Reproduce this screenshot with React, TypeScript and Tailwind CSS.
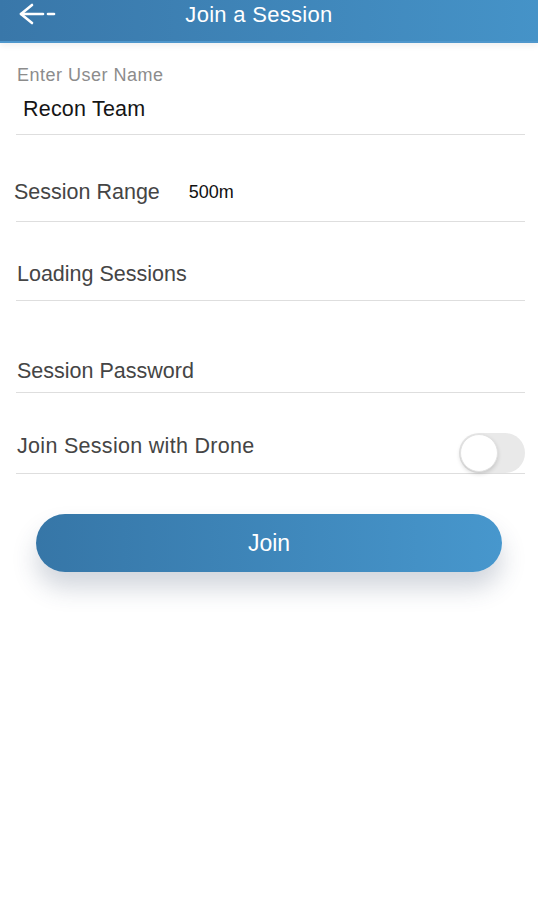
import { useState } from "react";

const Row = ({ children, className = "" }: { children: React.ReactNode; className?: string }) => (
  <div className={`border-b border-[#dedede] ${className}`}>{children}</div>
);

const App = () => {
  const [withDrone, setWithDrone] = useState(false);

  return (
    <div className="min-h-screen bg-white" style={{ fontFamily: '"Liberation Sans", Arial, sans-serif' }}>
      {/* Header */}
      <div className="relative h-[43px] bg-gradient-to-r from-[#3977a9] to-[#4593c8] border-b-2 border-[#4f97cc] shadow-[0_3px_6px_rgba(0,0,0,0.06)] flex items-center justify-center pr-[20px]">
        <button className="absolute left-[17px] top-[2px]">
          <svg width="40" height="24" viewBox="0 0 40 24" fill="none" stroke="white" strokeWidth="2.6" strokeLinecap="round" strokeLinejoin="round">
            <path d="M15 3 L4 12 L15 21" />
            <path d="M4 12 H26" />
            <path d="M31 12 H37" />
          </svg>
        </button>
        <h1 className="text-[22px] text-white leading-none -mt-[12px] tracking-[0.3px]">Join a Session</h1>
      </div>

      <div className="pl-[16px] pr-[13px]">
        <Row className="pt-[22px] pb-[12px]">
          <div className="text-[18px] leading-[20px] text-[#8c8c8c] pl-[1px] tracking-[0.5px]">Enter User Name</div>
          <div className="mt-[11px] text-[21.5px] leading-[26px] text-[#151515] pl-[7px] tracking-[0.2px]">Recon Team</div>
        </Row>

        <Row className="pt-[44px] pb-[16px] flex items-center">
          <span className="text-[21.5px] leading-[26px] text-[#454545] -ml-[2px]">Session Range</span>
          <span className="ml-[29px] text-[18px] leading-[26px] text-[#111] font-medium">500m</span>
        </Row>

        <Row className="pt-[39px] pb-[13px]">
          <div className="text-[21.5px] leading-[26px] text-[#454545] pl-[1px]">Loading Sessions</div>
        </Row>

        <Row className="pt-[57px] pb-[8px]">
          <div className="text-[21.5px] leading-[26px] text-[#454545] pl-[1px]">Session Password</div>
        </Row>

        <Row className="pt-[40px] flex items-start justify-between">
          <span className="text-[21.5px] leading-[26px] text-[#454545] pl-[1px] tracking-[0.3px]">Join Session with Drone</span>
          <button
            onClick={() => setWithDrone(!withDrone)}
            className={`relative w-[66px] h-[40px] rounded-full ${withDrone ? "bg-[#4593c8]" : "bg-[#e9e9e9]"}`}
          >
            <span
              className={`absolute top-[1px] ${withDrone ? "left-[27px]" : "left-[1px]"} w-[38px] h-[38px] rounded-full bg-white border border-[#e2e2e2] shadow-[0_2px_4px_rgba(0,0,0,0.15)]`}
            />
          </button>
        </Row>

        <div className="mt-[40px] pl-[20px] pr-[23px]">
          <button className="w-full h-[58px] rounded-full bg-gradient-to-r from-[#3676a7] to-[#4797cd] text-white text-[23px] shadow-[0_16px_24px_rgba(50,70,100,0.22)]">
            Join
          </button>
        </div>
      </div>
    </div>
  );
};

export default App;
